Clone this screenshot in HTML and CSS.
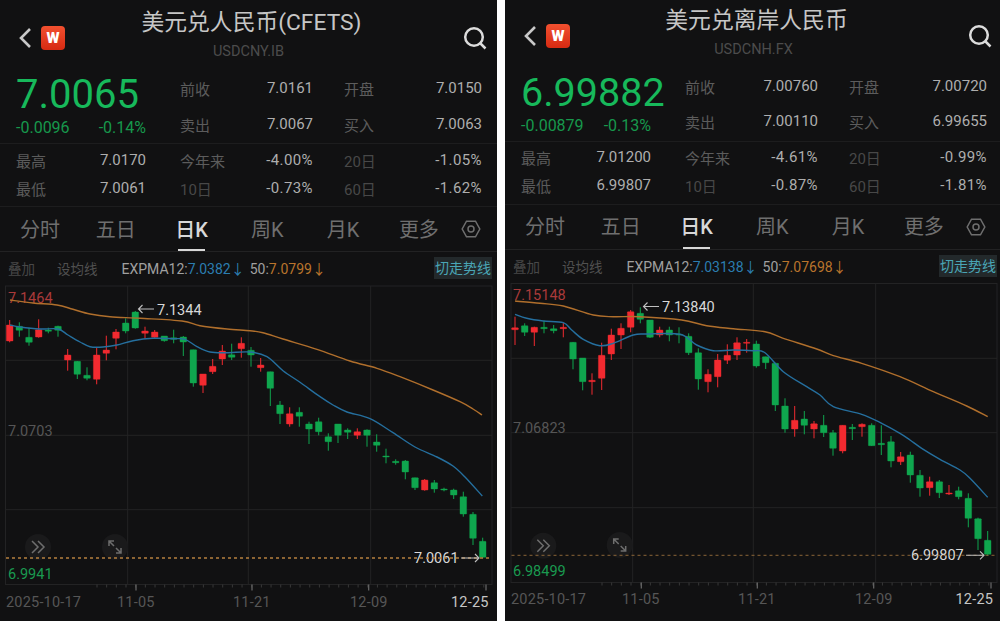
FILE: index.html
```html
<!DOCTYPE html>
<html lang="zh-CN">
<head>
    <meta charset="UTF-8">
    <meta name="viewport" content="width=device-width, initial-scale=1.0">
    <title>USD/CNY</title>
    <link rel="stylesheet" href="styles.css">
</head>
<body>
    <div class="page">
        <!-- Onshore panel -->
        <section class="panel panel-cny">
            <header class="header">
                <div class="header-left">
                    <svg class="back-icon" width="14" height="22" viewBox="0 0 14 22"><path d="M12 2 L3 11 L12 20"/></svg>
                    <span class="logo">W</span>
                </div>
                <div class="header-title">
                    <h1>美元兑人民币(CFETS)</h1>
                    <div class="symbol">USDCNY.IB</div>
                </div>
                <svg class="search-icon" width="24" height="24" viewBox="0 0 24 24"><circle cx="11" cy="11" r="8.8"/><path d="M17.5 17.5 L22.5 22.5"/></svg>
            </header>

            <div class="quote">
                <div class="price-block">
                    <div class="price">7.0065</div>
                    <div class="change"><span>-0.0096</span><span>-0.14%</span></div>
                </div>
                <div class="cell mid"><span class="label">前收</span><span class="value">7.0161</span></div>
                <div class="cell last"><span class="label">开盘</span><span class="value">7.0150</span></div>
                <div class="cell mid"><span class="label">卖出</span><span class="value">7.0067</span></div>
                <div class="cell last"><span class="label">买入</span><span class="value">7.0063</span></div>
            </div>

            <div class="stats">
                <div class="cell"><span class="label">最高</span><span class="value">7.0170</span></div>
                <div class="cell mid"><span class="label">今年来</span><span class="value pct">-4.00%</span></div>
                <div class="cell last"><span class="label dim">20日</span><span class="value pct">-1.05%</span></div>
                <div class="cell"><span class="label">最低</span><span class="value">7.0061</span></div>
                <div class="cell mid"><span class="label dim">10日</span><span class="value pct">-0.73%</span></div>
                <div class="cell last"><span class="label dim">60日</span><span class="value pct">-1.62%</span></div>
            </div>

            <nav class="tabs">
                <a class="tab">分时</a>
                <a class="tab">五日</a>
                <a class="tab active">日K</a>
                <a class="tab">周K</a>
                <a class="tab">月K</a>
                <a class="tab">更多</a>
                <svg class="gear-icon" width="20" height="20" viewBox="0 0 20 20"><path d="M5.5 2.2 H14.5 L18.8 10 L14.5 17.8 H5.5 L1.2 10 Z"/><circle cx="10" cy="10" r="3"/></svg>
            </nav>

            <div class="indicators">
                <span class="ind-btn">叠加</span>
                <span class="ind-btn wide">设均线</span>
                <span class="ema">EXPMA12:<span class="blue">7.0382↓</span></span>
                <span class="ema">50:<span class="orange">7.0799↓</span></span>
                <span class="switch">切走势线</span>
            </div>

            <svg class="chart" id="chart-cny" width="497" height="337" viewBox="0 284 497 337"></svg>
        </section>

        <!-- Offshore panel -->
        <section class="panel panel-cnh">
            <header class="header">
                <div class="header-left">
                    <svg class="back-icon" width="14" height="22" viewBox="0 0 14 22"><path d="M12 2 L3 11 L12 20"/></svg>
                    <span class="logo">W</span>
                </div>
                <div class="header-title">
                    <h1>美元兑离岸人民币</h1>
                    <div class="symbol">USDCNH.FX</div>
                </div>
                <svg class="search-icon" width="24" height="24" viewBox="0 0 24 24"><circle cx="11" cy="11" r="8.8"/><path d="M17.5 17.5 L22.5 22.5"/></svg>
            </header>

            <div class="quote">
                <div class="price-block">
                    <div class="price">6.99882</div>
                    <div class="change"><span>-0.00879</span><span>-0.13%</span></div>
                </div>
                <div class="cell mid"><span class="label">前收</span><span class="value">7.00760</span></div>
                <div class="cell last"><span class="label">开盘</span><span class="value">7.00720</span></div>
                <div class="cell mid"><span class="label">卖出</span><span class="value">7.00110</span></div>
                <div class="cell last"><span class="label">买入</span><span class="value">6.99655</span></div>
            </div>

            <div class="stats">
                <div class="cell"><span class="label">最高</span><span class="value">7.01200</span></div>
                <div class="cell mid"><span class="label">今年来</span><span class="value pct">-4.61%</span></div>
                <div class="cell last"><span class="label dim">20日</span><span class="value pct">-0.99%</span></div>
                <div class="cell"><span class="label">最低</span><span class="value">6.99807</span></div>
                <div class="cell mid"><span class="label dim">10日</span><span class="value pct">-0.87%</span></div>
                <div class="cell last"><span class="label dim">60日</span><span class="value pct">-1.81%</span></div>
            </div>

            <nav class="tabs">
                <a class="tab">分时</a>
                <a class="tab">五日</a>
                <a class="tab active">日K</a>
                <a class="tab">周K</a>
                <a class="tab">月K</a>
                <a class="tab">更多</a>
                <svg class="gear-icon" width="20" height="20" viewBox="0 0 20 20"><path d="M5.5 2.2 H14.5 L18.8 10 L14.5 17.8 H5.5 L1.2 10 Z"/><circle cx="10" cy="10" r="3"/></svg>
            </nav>

            <div class="indicators">
                <span class="ind-btn">叠加</span>
                <span class="ind-btn wide">设均线</span>
                <span class="ema">EXPMA12:<span class="blue">7.03138↓</span></span>
                <span class="ema">50:<span class="orange">7.07698↓</span></span>
                <span class="switch">切走势线</span>
            </div>

            <svg class="chart" id="chart-cnh" width="497" height="340" viewBox="505 281 497 340"></svg>
        </section>
    </div>

    <script src="chart.js"></script>
</body>
</html>
```

FILE: styles.css
```css
/* Base */
body {
    margin: 0;
    background: #fff;
    font-family: Roboto, "Noto Sans CJK SC", sans-serif;
    color: #aaa;
}

.page {
    display: flex;
    gap: 8px;
    width: 1000px;
    height: 622px;
    overflow: hidden;
}

.panel {
    flex: none;
    width: 497px;
    height: 621px;
    background: #111112;
    overflow: hidden;
}

/* Header */
.header {
    display: grid;
    grid-template-columns: 1fr auto 1fr;
    align-items: start;
    height: 63px;
    padding: 8px 11px 0 17px;
}

.panel-cnh .header {
    height: 63.5px;
    padding-top: 6px;
}

.header-left {
    display: flex;
    align-items: center;
    gap: 9px;
    margin-top: 18px;
    margin-left: 1px;
}

.back-icon path {
    fill: none;
    stroke: #c8c8c8;
    stroke-width: 2.6;
}

.logo {
    display: flex;
    align-items: center;
    justify-content: center;
    width: 24px;
    height: 24px;
    border-radius: 4px;
    background: linear-gradient(180deg, #f2502f, #d62a12);
    color: #fff;
    font-size: 15px;
    font-weight: 900;
    line-height: 1;
}

.header-title {
    text-align: center;
}

h1 {
    margin: 0;
    color: #c6c6c6;
    font-size: 22.8px;
    font-weight: 400;
    line-height: 30px;
}

.symbol {
    margin-top: 6px;
    margin-right: 6px;
    color: #4c4c4c;
    font-size: 14.5px;
    line-height: 16px;
}

.search-icon {
    justify-self: end;
    margin-top: 18px;
    margin-right: -1px;
}

.search-icon circle,
.search-icon path {
    fill: none;
    stroke: #dcdcdc;
    stroke-width: 2.5;
}

/* Quote block */
.quote,
.stats {
    display: grid;
    grid-template-columns: 164px 164px 138px;
    padding-left: 16px;
}

.quote {
    grid-template-rows: 36px 36px;
}

.panel-cnh .quote {
    grid-template-rows: 35px 35px;
    padding-bottom: 1.5px;
}

.stats {
    grid-template-rows: 28px 28px;
    padding-top: 3px;
    padding-bottom: 3px;
    border-top: 1px solid #1d1d1e;
    border-bottom: 1px solid #1d1d1e;
}

.panel-cnh .stats {
    padding-top: 2px;
    padding-bottom: 4px;
}

.price-block {
    grid-row: span 2;
    padding-right: 34px;
}

.price {
    margin-top: 2px;
    color: #17b95b;
    font-size: 40px;
    line-height: 44px;
}

.panel-cnh .price {
    margin-top: 1.5px;
    font-size: 39.5px;
}

.change {
    display: flex;
    justify-content: space-between;
    margin-top: 2px;
    color: #17984c;
    font-size: 16px;
    line-height: 18px;
}

.cell {
    display: flex;
    align-items: center;
    justify-content: space-between;
    padding-right: 34px;
    padding-bottom: 2px;
}

.cell.mid {
    padding-right: 31px;
}

.cell.last {
    padding-right: 0;
}

.label {
    color: #5c5c5c;
    font-size: 15px;
}

.label.dim {
    color: #484848;
}

.value {
    color: #aeaeae;
    font-size: 15px;
}

.value.pct {
    letter-spacing: 0.4px;
}

/* Tabs */
.tabs {
    display: flex;
    align-items: center;
    height: 44px;
    padding-left: 2px;
    border-bottom: 1px solid #222223;
}

.tab {
    position: relative;
    width: 75.8px;
    height: 44px;
    color: #6f6f6f;
    font-size: 20px;
    line-height: 44px;
    text-align: center;
}

.panel-cny .tab {
    line-height: 46px;
}

.tab.active {
    color: #d8d8d8;
    font-weight: 500;
}

.tab.active::after {
    content: "";
    position: absolute;
    left: 24px;
    right: 24px;
    bottom: 0;
    height: 2px;
    background: #d8d8d8;
}

.gear-icon {
    margin-left: 4px;
}

.gear-icon path,
.gear-icon circle {
    fill: none;
    stroke: #6f6f6f;
    stroke-width: 1.5;
}

/* Indicator row */
.indicators {
    display: flex;
    align-items: center;
    height: 32px;
    padding: 0 5px 0 8px;
    font-size: 14px;
}

.panel-cnh .indicators {
    height: 31px;
}

.ind-btn {
    margin-right: 22px;
    color: #484848;
    font-size: 13.5px;
}

.ind-btn.wide {
    margin-right: 24px;
    color: #505050;
}

.ema {
    margin-right: 5px;
    color: #a0a0a0;
}

.blue {
    color: #2b7db0;
}

.orange {
    color: #b9742c;
}

.switch {
    margin-left: auto;
    padding: 0 1px;
    background: #23292b;
    color: #4aa5b5;
    font-size: 14px;
    line-height: 22px;
}

/* Chart */
.chart {
    display: block;
}

.chart text {
    font-family: Roboto, sans-serif;
    font-size: 14.5px;
    dominant-baseline: central;
}

.grid-line {
    stroke: #232324;
    stroke-width: 1;
}

.tick {
    stroke: #383838;
    stroke-width: 1;
}

.tick-major {
    stroke: #6a6a6a;
    stroke-width: 1.2;
}

.ema12 {
    fill: none;
    stroke: #256f9e;
    stroke-width: 1.4;
}

.ema50 {
    fill: none;
    stroke: #b06f2c;
    stroke-width: 1.4;
}

.last-line {
    stroke: #b5803f;
    stroke-width: 1.3;
    stroke-dasharray: 3 3;
}

.last-line.faint {
    stroke: #8a6438;
    stroke-width: 1;
}

.candle-up {
    fill: #f22a30;
    stroke: #f22a30;
}

.candle-down {
    fill: #0fa64e;
    stroke: #0fa64e;
}

.label-high {
    fill: #a93a3a;
}

.label-mid {
    fill: #565656;
}

.label-low {
    fill: #1a9a50;
}

.label-note {
    fill: #d8d8d8;
}

.label-date {
    fill: #565656;
    letter-spacing: 0.2px;
}

.label-date.last {
    fill: #c6c6c6;
}

.note-arrow {
    fill: none;
    stroke: #c0c0c0;
    stroke-width: 1.1;
}

.round-btn {
    fill: #1a1a1b;
}

.round-icon {
    fill: none;
    stroke: #6e6e6e;
    stroke-width: 1.5;
}
```

FILE: chart.js
```js
// Candles are [x, high, bodyTop, bodyBottom, low, 'u' or 'd'], all in page pixels
const charts = {
    'chart-cny': {
        candles: [
            [9.7,320,325,341,342.3,'u'],[19.3,322.3,326.3,330.3,336.7,'d'],[29,327.7,337.3,342.3,345.7,'d'],[38.7,319.3,329.7,337,337.7,'u'],
            [48.3,327.7,330,331.3,333.3,'d'],[58,325.7,326.3,330.3,336.7,'d'],[67.7,349,355,360,370.7,'u'],[77.3,361,361.3,374.3,379,'d'],
            [87,367.3,375.3,378.3,380.3,'d'],[96.7,347.7,355,379.3,384.3,'u'],[106.3,335.7,350,353.3,360.3,'u'],[116,329,332,338.3,349.3,'u'],
            [125.7,318.3,323,331,333.3,'d'],[135.3,311,312,328,328.7,'d'],[145,326.7,331,333.3,339,'u'],[154.7,330,332,337.3,337.7,'u'],
            [164.3,336,336,340.7,341.7,'d'],[173.7,329.7,337.7,339.3,343.3,'d'],[183.3,336,337,342,356,'d'],[193.3,349.7,349.7,383,386.7,'d'],
            [203,374,374,385.3,393,'u'],[212.7,359,366.3,371.7,374,'u'],[222.3,345,351,359,365,'u'],[231.7,343.7,354.7,357.3,360,'d'],
            [241.3,337.3,343.3,348.7,357.7,'u'],[251,347,350.3,355,366.7,'d'],[260.7,358,365,367.7,371.7,'u'],[270.3,371.7,371.7,388.3,406,'d'],
            [280,401,405,413.7,424,'d'],[289.7,407.3,413.7,424,426.7,'u'],[299.3,407.3,412.3,416.3,426.7,'d'],[309,421.7,424,429,444,'d'],
            [318.7,417.7,421.7,431.7,435.3,'d'],[328.3,433.3,436.7,441.7,450.7,'d'],[338,424,424,435.3,443,'d'],[347.7,428.3,430,432.3,439,'d'],
            [357.3,428.3,431.7,435.3,439,'u'],[367,429.3,430,435.3,446.7,'d'],[376.7,434.3,442,445.3,451.7,'d'],[386,448.7,456,457,463.3,'d'],
            [395.7,459.3,461.3,462.7,464.7,'d'],[405.3,460,461,472,479.3,'d'],[415,477.7,477.7,487.7,490,'d'],[424.7,479,480,490,490.7,'u'],
            [434.3,480,482.7,489,492.7,'d'],[444,487.7,489,490,491.3,'d'],[453.7,488.7,490,495,499,'d'],[463.3,491.7,496.7,514,516.7,'d'],
            [473,512,514.3,538.3,545,'d'],[482.7,537.7,541.3,557.3,558.3,'d']
        ],
        ema12: [[10,325],[20,327],[40,329],[58,329],[68,335],[80,342],[90,346.7],[103,347],[117,345],[133,340.7],[153,338.3],[173,338.7],[185,339.3],[197,346.7],[210,352],[227,352.7],[250,352],[267,356.7],[283,370.7],[300,382.3],[320,396.7],[333,405],[347,412],[370,418.7],[393,432.7],[415,447],[437,457],[453,466],[465,477],[482.3,496]],
        ema50: [[10,300],[33,303],[57,305],[73,309.3],[90,314],[110,316.7],[140,318.3],[182,321],[200,325.7],[227,329],[250,330.7],[263,332.7],[283,339],[317,349.3],[350,361],[377,368.3],[400,376.7],[433,390],[460,401.7],[473,409],[482,415]],
        grid: { left: 5.5, right: 492, top: 286, bottom: 584.5, v: [127.7, 248.3, 370.7], h: [360.3, 435.3, 509.7] },
        ticks: { start: 97, end: 490, major: [136, 252, 368.7, 486] },
        lastY: 558, faint: false,
        labels: [
            ['7.1464', 8, 298, 'label-high'], ['7.0703', 8, 431, 'label-mid'], ['6.9941', 8, 574, 'label-low'],
            ['7.1344', 157, 310, 'label-note'], ['7.0061', 414, 558, 'label-note'],
            ['2025-10-17', 6, 602, 'label-date'], ['11-05', 117, 602, 'label-date'], ['11-21', 233, 602, 'label-date'],
            ['12-09', 350, 602, 'label-date'], ['12-25', 451, 602, 'label-date last']
        ],
        arrows: { left: [138.5, 154, 309], right: [461, 479, 558] },
        buttons: { more: [38, 547], expand: [115, 547] }
    },
    'chart-cnh': {
        candles: [
            [515,316.7,327.7,329.7,345,'u'],[524.7,323.3,325.7,332.3,336,'d'],[534.3,326.7,327.3,332.3,346,'u'],[544,320.7,327.3,328.7,333.3,'d'],
            [553.7,325,328.7,330.7,333.3,'d'],[563.3,322.7,327.3,328.7,337.3,'u'],[573,342,342.3,359,369.3,'d'],[582.7,358,358,381.7,390.3,'d'],
            [592,373.3,380.3,381.7,394.7,'u'],[601.7,342.7,355.3,378.3,390,'u'],[611.3,328.7,335,354,360,'u'],[621,323.3,328.3,335,349,'u'],
            [630.7,310,311.7,327.3,332.3,'u'],[640.3,307.3,313.3,319.3,323.3,'d'],[650,320,320,337.3,338,'d'],[659.7,326.7,330,335,337.3,'u'],
            [669.3,326.7,330,335,341.3,'d'],[679,327.3,334.3,335,343.3,'d'],[688.7,333.3,336.3,352.7,355,'d'],[698.3,348.3,352.7,379,389.7,'d'],
            [708,369.3,374.3,381.7,392.3,'u'],[717.7,354,360,376.7,387.3,'u'],[727.3,344.3,355.3,360.3,364,'u'],[737,337.3,342.7,355,360,'u'],
            [746.7,339,342.3,343.3,352.7,'u'],[756.3,340.7,344,366,367.7,'d'],[765.7,356.7,356.7,362.7,369,'d'],[775.3,362.7,363.3,405,411,'d'],
            [785,398.3,406,429,432.7,'d'],[794.7,406,420.3,429,436.7,'u'],[804.3,411,419,425.3,434.3,'d'],[814,421,423.7,429,438.3,'u'],
            [823.7,415,425.3,432.7,437,'d'],[833,430,432.7,448.3,455.7,'d'],[842.7,425.3,425.3,451,453.3,'u'],[852.3,424,427.3,428.7,440,'d'],
            [862,423.3,424.3,426.7,436.7,'u'],[871.7,423.3,425.3,445.7,446,'d'],[881.3,425.3,443.3,444.7,455,'d'],[891,436,441.7,461,467.3,'d'],
            [900.7,452,456.7,461.7,465,'u'],[910.3,451.7,455,475,482.7,'d'],[920,470,475.3,488,496.7,'d'],[929.7,476.7,481.7,487.7,495.7,'u'],
            [939.3,480,481.7,492.7,498,'d'],[949,485,493,494,495,'u'],[958.7,486.7,490.7,496.7,499.3,'d'],[968.3,493.3,498.3,518.3,527.3,'d'],
            [978,517.7,518.7,538.7,550,'d'],[987.7,531,540.3,554.3,556,'d']
        ],
        ema12: [[515,314.3],[526.7,318.3],[543.3,321],[563.3,322.7],[571.7,330],[583.3,339.3],[600,345.7],[613.3,343.3],[633.3,335],[646.7,334],[680,334.3],[696.7,345],[713.3,350.7],[733.3,350],[753.3,350.7],[765,352.7],[783.3,371.7],[806.7,386.7],[820,395],[833.3,406.7],[861.7,414.3],[881.7,423.3],[900,433.3],[910,440],[921.7,448.3],[940,459.3],[960,470],[970,478.3],[987.7,497.3]],
        ema50: [[515,301],[540,303.3],[563.3,306],[593.3,315],[613.3,316.7],[640,316.7],[681.7,320],[706.7,325.7],[733.3,328.7],[765,331.7],[783.3,338.3],[816.7,349],[833.3,355.7],[861.7,363.3],[900,376.7],[933.3,391.7],[966.7,406],[987.7,416.7]],
        grid: { left: 511, right: 997, top: 283.5, bottom: 582.5, v: [632.7, 753.3, 875.7], h: [358.3, 432.7, 507.7] },
        ticks: { start: 602, end: 995, major: [641.3, 757.3, 873.7, 991] },
        lastY: 555.3, faint: true,
        labels: [
            ['7.15148', 513, 295, 'label-high'], ['7.06823', 513, 428, 'label-mid'], ['6.98499', 513, 571, 'label-low'],
            ['7.13840', 662, 307, 'label-note'], ['6.99807', 911, 555, 'label-note'],
            ['2025-10-17', 511, 599.5, 'label-date'], ['11-05', 622, 599.5, 'label-date'], ['11-21', 738, 599.5, 'label-date'],
            ['12-09', 855, 599.5, 'label-date'], ['12-25', 955.5, 599.5, 'label-date last']
        ],
        arrows: { left: [643.5, 659, 306.5], right: [966, 984, 555.3] },
        buttons: { more: [543.3, 545.8], expand: [619.7, 545] }
    }
};

const SVG_NS = 'http://www.w3.org/2000/svg';

function add(svg, tag, attrs, text) {
    const el = document.createElementNS(SVG_NS, tag);
    for (const key in attrs) {
        el.setAttribute(key, attrs[key]);
    }
    if (text) el.textContent = text;
    svg.appendChild(el);
    return el;
}

function addLine(svg, x1, y1, x2, y2, cls) {
    add(svg, 'line', { x1: x1, y1: y1, x2: x2, y2: y2, class: cls });
}

// Smooth the moving average through its points
function smoothPath(points) {
    let d = 'M' + points[0][0] + ' ' + points[0][1];
    for (let i = 1; i < points.length; i++) {
        const p0 = points[Math.max(i - 2, 0)];
        const p1 = points[i - 1];
        const p2 = points[i];
        const p3 = points[Math.min(i + 1, points.length - 1)];
        const c1x = p1[0] + (p2[0] - p0[0]) / 6;
        const c1y = p1[1] + (p2[1] - p0[1]) / 6;
        const c2x = p2[0] - (p3[0] - p1[0]) / 6;
        const c2y = p2[1] - (p3[1] - p1[1]) / 6;
        d += ' C' + c1x + ' ' + c1y + ' ' + c2x + ' ' + c2y + ' ' + p2[0] + ' ' + p2[1];
    }
    return d;
}

function drawGrid(svg, chart) {
    const g = chart.grid;
    add(svg, 'rect', { x: g.left, y: g.top, width: g.right - g.left, height: g.bottom - g.top, fill: 'none', class: 'grid-line' });
    g.v.forEach(x => addLine(svg, x, g.top, x, g.bottom, 'grid-line'));
    g.h.forEach(y => addLine(svg, g.left, y, g.right, y, 'grid-line'));

    for (let x = chart.ticks.start; x < chart.ticks.end; x += 9.67) {
        addLine(svg, x, g.bottom, x, g.bottom + 3, 'tick');
    }
    chart.ticks.major.forEach(x => addLine(svg, x, g.bottom, x, g.bottom + 6, 'tick-major'));
}

function drawCandle(svg, c) {
    const cls = c[5] === 'u' ? 'candle-up' : 'candle-down';
    addLine(svg, c[0], c[1], c[0], c[4], cls);
    add(svg, 'rect', { x: c[0] - 3.3, y: c[2], width: 6.6, height: Math.max(c[3] - c[2], 0.8), rx: 0.5, class: cls, 'stroke-width': 0.4 });
}

function drawButtons(svg, buttons) {
    const m = buttons.more;
    add(svg, 'circle', { cx: m[0], cy: m[1], r: 13, class: 'round-btn' });
    add(svg, 'path', {
        class: 'round-icon',
        d: `M${m[0] - 6} ${m[1] - 6} L${m[0]} ${m[1]} L${m[0] - 6} ${m[1] + 6} M${m[0]} ${m[1] - 6} L${m[0] + 6} ${m[1]} L${m[0]} ${m[1] + 6}`
    });

    const e = buttons.expand;
    add(svg, 'circle', { cx: e[0], cy: e[1], r: 13, class: 'round-btn' });
    add(svg, 'path', {
        class: 'round-icon',
        d: `M${e[0] - 6} ${e[1] - 6} L${e[0] - 1} ${e[1] - 1} M${e[0] - 6} ${e[1] - 1} V${e[1] - 6} H${e[0] - 1} M${e[0] + 6} ${e[1] + 6} L${e[0] + 1} ${e[1] + 1} M${e[0] + 6} ${e[1] + 1} V${e[1] + 6} H${e[0] + 1}`
    });
}

function drawArrows(svg, arrows) {
    const l = arrows.left;
    add(svg, 'path', { class: 'note-arrow', d: `M${l[1]} ${l[2]} H${l[0]} M${l[0] + 4} ${l[2] - 4} L${l[0]} ${l[2]} L${l[0] + 4} ${l[2] + 4}` });
    const r = arrows.right;
    add(svg, 'path', { class: 'note-arrow', d: `M${r[0]} ${r[2]} H${r[1]} M${r[1] - 4} ${r[2] - 4} L${r[1]} ${r[2]} L${r[1] - 4} ${r[2] + 4}` });
}

function drawChart(id, chart) {
    const svg = document.getElementById(id);
    drawGrid(svg, chart);

    chart.labels.forEach(l => add(svg, 'text', { x: l[1], y: l[2], class: l[3] }, l[0]));

    chart.candles.forEach(c => drawCandle(svg, c));
    add(svg, 'path', { class: 'ema12', d: smoothPath(chart.ema12) });
    add(svg, 'path', { class: 'ema50', d: smoothPath(chart.ema50) });

    drawButtons(svg, chart.buttons);
    addLine(svg, chart.grid.left + 0.5, chart.lastY, chart.grid.right - 2, chart.lastY, chart.faint ? 'last-line faint' : 'last-line');
    drawArrows(svg, chart.arrows);
}

for (const id in charts) {
    drawChart(id, charts[id]);
}
```
